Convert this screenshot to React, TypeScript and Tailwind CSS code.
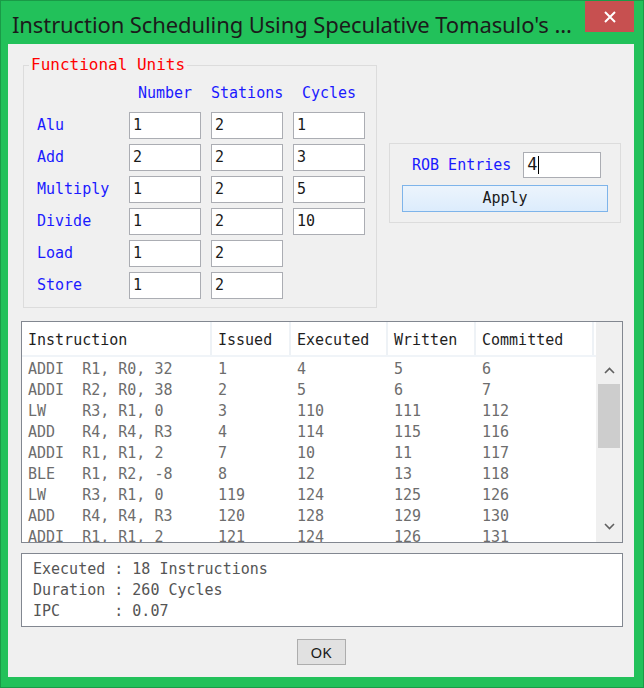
import React from "react";

const MONO = "font-['Consolas','DejaVu_Sans_Mono',monospace]";

const units = [
  { name: "Alu", number: "1", stations: "2", cycles: "1" },
  { name: "Add", number: "2", stations: "2", cycles: "3" },
  { name: "Multiply", number: "1", stations: "2", cycles: "5" },
  { name: "Divide", number: "1", stations: "2", cycles: "10" },
  { name: "Load", number: "1", stations: "2", cycles: null },
  { name: "Store", number: "1", stations: "2", cycles: null },
];

const rows = [
  ["ADDI  R1, R0, 32", "1", "4", "5", "6"],
  ["ADDI  R2, R0, 38", "2", "5", "6", "7"],
  ["LW    R3, R1, 0", "3", "110", "111", "112"],
  ["ADD   R4, R4, R3", "4", "114", "115", "116"],
  ["ADDI  R1, R1, 2", "7", "10", "11", "117"],
  ["BLE   R1, R2, -8", "8", "12", "13", "118"],
  ["LW    R3, R1, 0", "119", "124", "125", "126"],
  ["ADD   R4, R4, R3", "120", "128", "129", "130"],
  ["ADDI  R1, R1, 2", "121", "124", "126", "131"],
];

const colWidths = ["w-[190px]", "w-[79px]", "w-[97px]", "w-[88px]", "w-[118px]"];
const headers = ["Instruction", "Issued", "Executed", "Written", "Committed"];

function Field({ value }: { value: string }) {
  return (
    <div className="w-[72px] h-[27px] bg-white border border-[#abadb3] pl-[3px] flex items-center text-[15px] text-[#1a1a1a]">
      {value}
    </div>
  );
}

export default function App() {
  return (
    <div className="w-[644px] h-[688px] bg-[#22c15a] border border-[#1a9a47] flex flex-col">
      {/* Title bar */}
      <div className="h-[43px] shrink-0 flex items-start justify-between pl-[11px]">
        <div className="pt-[9px] text-[22px] leading-[28px] text-[#1b1b1b] font-['Noto_Sans','Open_Sans',sans-serif] tracking-[-0.1px] whitespace-nowrap">
          Instruction Scheduling Using Speculative Tomasulo's ...
        </div>
        <div className="w-[49px] h-[31px] shrink-0 bg-[#c75050] mr-[9px] flex items-center justify-center">
          <svg width="12" height="12" viewBox="0 0 12 12">
            <path d="M1 1L11 11M11 1L1 11" stroke="white" strokeWidth="2" />
          </svg>
        </div>
      </div>

      {/* Client area */}
      <div className={`mx-[7px] w-[626px] h-[633px] bg-[#f0f0f0] px-[13px] pt-[13px] ${MONO}`}>
        <div className="flex items-start gap-[12px] ml-[2px]">
          {/* Functional units group */}
          <fieldset className="w-[356px] h-[251px] border border-[#dcdcdc] pl-[13px]">
            <legend className="text-[16px] leading-[16px] text-[#ff0000] px-[2px] ml-[-8px]">
              Functional Units
            </legend>
            <div className="text-[15px] text-[#1a1aff]">
              <div className="flex h-[20px] mt-[10px] items-center">
                <div className="w-[92px]" />
                <div className="w-[72px] text-center">Number</div>
                <div className="w-[82px] pl-[10px] text-center">Stations</div>
                <div className="w-[82px] pl-[10px] text-center">Cycles</div>
              </div>
              <div className="flex flex-col gap-[5px] mt-[9px]">
                {units.map((u) => (
                  <div key={u.name} className="flex items-center gap-[10px]">
                    <div className="w-[82px]">{u.name}</div>
                    <Field value={u.number} />
                    <Field value={u.stations} />
                    {u.cycles !== null && <Field value={u.cycles} />}
                  </div>
                ))}
              </div>
            </div>
          </fieldset>

          {/* ROB group */}
          <div className="mt-[86px] w-[232px] h-[80px] border border-[#dcdcdc] px-[12px] pt-[8px]">
            <div className="flex items-center pl-[10px] gap-[12px]">
              <span className="text-[15px] text-[#1a1aff]">ROB Entries</span>
              <div className="w-[78px] h-[26px] bg-white border border-[#abadb3] pl-[3px] flex items-center text-[17px] text-[#1a1a1a]">
                4<span className="w-[1px] h-[18px] bg-black" />
              </div>
            </div>
            <div className="mt-[7px] w-[206px] h-[27px] border border-[#7eb4ea] bg-gradient-to-b from-[#ecf4fc] to-[#dcecfc] flex items-center justify-center text-[15px] text-[#1a1a1a]">
              Apply
            </div>
          </div>
        </div>

        {/* Instruction table */}
        <div className="mt-[13px] w-[602px] h-[222px] border border-[#828790] bg-white flex overflow-hidden">
          <div className="w-[574px] flex flex-col">
            <div className="h-[35px] shrink-0 flex bg-white border-b-[2px] border-[#f0f4f8]">
              {headers.map((h, i) => (
                <div
                  key={h}
                  className={`${colWidths[i]} h-full flex items-center pl-[6px] pt-[3px] text-[15px] text-[#1e1e1e] border-r-[2px] border-[#eef2f6]`}
                >
                  {h}
                </div>
              ))}
            </div>
            <div className="flex flex-col shrink-0 pt-[2px]">
              {rows.map((r, ri) => (
                <div key={ri} className="h-[21px] shrink-0 flex items-center text-[15px] text-[#6d6d6d]">
                  {r.map((c, ci) => (
                    <div key={ci} className={`${colWidths[ci]} pl-[6px] whitespace-pre`}>
                      {c}
                    </div>
                  ))}
                </div>
              ))}
            </div>
          </div>
          {/* Scrollbar */}
          <div className="w-[26px] bg-[#f0f0f0] ml-auto flex flex-col items-center">
            <div className="h-[35px] w-full shrink-0" />
            <div className="h-[27px] shrink-0 flex items-center justify-center">
              <svg width="11" height="7" viewBox="0 0 11 7">
                <path d="M1 6L5.5 1.5L10 6" stroke="#606060" strokeWidth="1.6" fill="none" />
              </svg>
            </div>
            <div className="w-[22px] h-[64px] shrink-0 bg-[#cdcdcd]" />
            <div className="flex-1" />
            <div className="h-[27px] shrink-0 flex items-center justify-center mb-[2px]">
              <svg width="11" height="7" viewBox="0 0 11 7">
                <path d="M1 1L5.5 5.5L10 1" stroke="#606060" strokeWidth="1.6" fill="none" />
              </svg>
            </div>
          </div>
        </div>

        {/* Summary */}
        <div className="mt-[10px] w-[602px] h-[74px] border border-[#828790] bg-white pl-[11px] pt-[5px] text-[15px] leading-[21px] text-[#555555] whitespace-pre">
          <div>Executed : 18 Instructions</div>
          <div>Duration : 260 Cycles</div>
          <div>IPC      : 0.07</div>
        </div>

        {/* OK */}
        <div className="flex justify-center mt-[12px]">
          <div className="w-[49px] h-[26px] bg-[#e1e1e1] border border-[#adadad] flex items-center justify-center text-[15px] text-[#1a1a1a] font-['Noto_Sans',sans-serif]">
            OK
          </div>
        </div>
      </div>
    </div>
  );
}
